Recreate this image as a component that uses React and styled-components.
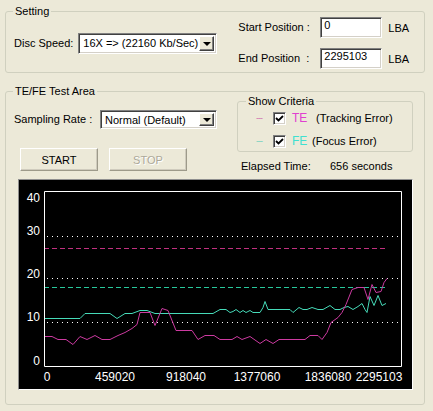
import React from 'react';
import styled, { createGlobalStyle } from 'styled-components';

const GlobalStyle = createGlobalStyle`
  html, body {
    margin: 0;
    background: #ece9d8;
  }
  body {
    font-family: "Liberation Sans", Arial, sans-serif;
    font-size: 11px;
    color: #000;
  }
`;

const Window = styled.div`
  width: 433px;
  height: 411px;
  box-sizing: border-box;
  padding: 6px 8px 0 5px;
  display: flex;
  flex-direction: column;
  gap: 13px;
  background: #ece9d8;
  overflow: hidden;
`;

const Group = styled.fieldset`
  margin: 0;
  min-width: 0;
  border: 1px solid #d0d0bf;
  border-radius: 3px;
  padding: ${(p) => p.$pad};
  display: flex;
  flex-direction: ${(p) => (p.$column ? 'column' : 'row')};
  align-items: ${(p) => (p.$column ? 'stretch' : 'center')};
  ${(p) => p.$width && `width: ${p.$width}px; box-sizing: border-box;`}
`;

const Legend = styled.legend`
  padding: 0 2px;
  margin-left: ${(p) => p.$offset || -1}px;
  line-height: 10px;
  font-size: 11px;
  color: #000;
`;

const Label = styled.span`
  white-space: pre;
  line-height: 13px;
  ${(p) => p.$width && `width: ${p.$width}px; flex: none;`}
`;

const Combo = styled.div`
  width: ${(p) => p.$width}px;
  height: ${(p) => p.$height}px;
  box-sizing: border-box;
  background: #fff;
  border-top: 1px solid #808080;
  border-left: 1px solid #808080;
  border-right: 1px solid #fff;
  border-bottom: 1px solid #fff;
  box-shadow: inset 1px 1px 0 #404040, inset -1px -1px 0 #d4d0c8;
  padding: 2px;
  display: flex;
  align-items: center;
`;

const ComboText = styled.span`
  flex: 1;
  padding-left: 2px;
  white-space: nowrap;
  overflow: hidden;
`;

const DropButton = styled.span`
  width: 15px;
  height: 100%;
  box-sizing: border-box;
  background: #ece9d8;
  border-top: 1px solid #fff;
  border-left: 1px solid #fff;
  border-right: 1px solid #404040;
  border-bottom: 1px solid #404040;
  box-shadow: inset -1px -1px 0 #808080;
  display: flex;
  align-items: center;
  justify-content: center;
  &::after {
    content: '';
    border-left: 4px solid transparent;
    border-right: 4px solid transparent;
    border-top: 4px solid #000;
    margin-top: 1px;
  }
`;

const TextBox = styled.div`
  width: 62px;
  height: 21px;
  box-sizing: border-box;
  background: #fff;
  border-top: 1px solid #808080;
  border-left: 1px solid #808080;
  border-right: 1px solid #fff;
  border-bottom: 1px solid #fff;
  box-shadow: inset 1px 1px 0 #404040, inset -1px -1px 0 #d4d0c8;
  padding: 1px 3px;
  line-height: 13px;
`;

const Row = styled.div`
  display: flex;
  align-items: center;
  gap: ${(p) => p.$gap || 0}px;
  ${(p) => p.$mt && `margin-top: ${p.$mt}px;`}
  ${(p) => p.$ml && `margin-left: ${p.$ml}px;`}
`;

const Column = styled.div`
  display: flex;
  flex-direction: column;
  gap: ${(p) => p.$gap || 0}px;
  ${(p) => p.$width && `width: ${p.$width}px;`}
  ${(p) => p.$ml && `margin-left: ${p.$ml};`}
`;

const Unit = styled.span`
  margin-left: 6px;
`;

const TopArea = styled.div`
  display: flex;
  align-items: flex-start;
`;

const Button = styled.button`
  width: 78px;
  height: 23px;
  box-sizing: border-box;
  background: #ece9d8;
  font-family: inherit;
  font-size: 11px;
  color: ${(p) => (p.disabled ? '#aca899' : '#000')};
  border-top: 1px solid #fff;
  border-left: 1px solid #fff;
  border-right: 1px solid #9d9a8a;
  border-bottom: 1px solid #9d9a8a;
  box-shadow: inset -1px -1px 0 #cfcbbd;
  padding: 0;
  text-shadow: ${(p) => (p.disabled ? '1px 1px 0 #fff' : 'none')};
`;

const CriteriaRow = styled.div`
  display: flex;
  align-items: center;
  height: 14px;
`;

const Dash = styled.span`
  width: 17px;
  flex: none;
  color: ${(p) => p.$color};
  font-size: 9px;
  letter-spacing: -1px;
`;

const Check = styled.span`
  width: 13px;
  height: 13px;
  box-sizing: border-box;
  flex: none;
  background: #fff;
  border-top: 1px solid #808080;
  border-left: 1px solid #808080;
  border-right: 1px solid #fff;
  border-bottom: 1px solid #fff;
  box-shadow: inset 1px 1px 0 #404040, inset -1px -1px 0 #d4d0c8;
  margin-right: 6px;
  display: flex;
  align-items: center;
  justify-content: center;
`;

const Code = styled.span`
  color: ${(p) => p.$color};
  font-size: 12px;
  width: ${(p) => p.$width}px;
  flex: none;
`;

const ChartPanel = styled.div`
  margin: 6px 0 0 4px;
  height: 211px;
  box-sizing: border-box;
  background: #000;
  border-top: 1px solid #8f8f8f;
  border-left: 1px solid #8f8f8f;
  border-right: 1px solid #fff;
  border-bottom: 1px solid #fff;
  svg {
    display: block;
  }
`;

const fe = [
  [44, 319], [80, 319], [85, 314], [110, 314], [117, 319], [125, 314], [132, 314], [140, 311],
  [147, 311], [155, 314], [213, 314], [220, 310], [226, 310], [230, 313], [233, 312], [236, 310],
  [240, 313], [243, 311], [246, 313], [250, 311], [253, 313], [260, 313], [263, 308], [265, 302],
  [268, 310], [290, 310], [293, 313], [299, 308], [303, 310], [307, 310], [312, 308], [318, 310],
  [323, 310], [330, 306], [335, 310], [340, 310], [344, 308], [348, 307], [353, 310], [358, 307],
  [362, 304], [365, 310], [367, 313], [370, 297], [374, 306], [378, 296], [382, 306], [386, 304],
];

const te = [
  [44, 337], [52, 337], [58, 340], [66, 340], [73, 345], [80, 337], [87, 340], [95, 336],
  [102, 340], [110, 340], [118, 336], [125, 333], [132, 329], [137, 325], [140, 313], [150, 313],
  [155, 326], [162, 309], [168, 311], [176, 331], [192, 331], [198, 340], [205, 336], [214, 336],
  [220, 340], [232, 340], [237, 337], [242, 340], [250, 337], [260, 344], [266, 340], [273, 344],
  [279, 340], [305, 340], [310, 336], [318, 336], [322, 340], [327, 333], [331, 323], [338, 318],
  [342, 313], [346, 305], [352, 290], [358, 288], [364, 288], [368, 300], [372, 285], [376, 293],
  [381, 292], [384, 283], [387, 279],
];

const yLabels = [
  ['40', 203],
  ['30', 236],
  ['20', 279],
  ['10', 322],
  ['0', 366],
];

const xLabels = [
  ['0', 47],
  ['459020', 115],
  ['918040', 186],
  ['1377060', 257],
  ['1836080', 328],
  ['2295103', 379],
];

const pts = (list) => list.map(([x, y]) => `${x},${y + 0.5}`).join(' ');

const Chart = () => (
  <svg width="393" height="209" viewBox="19 181 393 209">
    <g fontFamily="Liberation Sans, Arial, sans-serif" fontSize="12" fill="#fff">
      {yLabels.map(([t, y]) => (
        <text key={t} x="40" y={y} textAnchor="end">{t}</text>
      ))}
      {xLabels.map(([t, x]) => (
        <text key={t} x={x} y="382" textAnchor="middle">{t}</text>
      ))}
    </g>
    {[237, 279, 323].map((y) => (
      <line key={y} x1="47" x2="398" y1={y + 0.5} y2={y + 0.5} stroke="#fff" strokeDasharray="1 4" />
    ))}
    <line x1="44" x2="388" y1="249.5" y2="249.5" stroke="#c0307f" strokeDasharray="5 3" />
    <line x1="44" x2="388" y1="288.5" y2="288.5" stroke="#28c89c" strokeDasharray="5 3" />
    <polyline points={pts(fe)} fill="none" stroke="#46dbb9" strokeWidth="1" />
    <polyline points={pts(te)} fill="none" stroke="#cc3aa0" strokeWidth="1" />
    <polyline points="44.5,192.5 401.5,192.5 401.5,367.5 44.5,367.5 44.5,192.5" fill="none" stroke="#fff" />
  </svg>
);

const CheckMark = () => (
  <svg width="9" height="9" viewBox="0 0 9 9">
    <polyline points="1,4 3.5,6.5 8,2" fill="none" stroke="#000" strokeWidth="1.8" />
  </svg>
);

export default function App() {
  return (
    <>
      <GlobalStyle />
      <Window>
        <Group $pad="1px 0 3px 8px">
          <Legend>Setting</Legend>
          <Row $gap={5}>
            <Label>Disc Speed:</Label>
            <Combo $width={139} $height={21}>
              <ComboText>16X =&gt; (22160 Kb/Sec)</ComboText>
              <DropButton />
            </Combo>
          </Row>
          <Column $gap={10} $ml="21px">
            <Row>
              <Label $width={82}>Start Position :</Label>
              <TextBox>0</TextBox>
              <Unit>LBA</Unit>
            </Row>
            <Row>
              <Label $width={82}>{'End Position  :'}</Label>
              <TextBox>2295103</TextBox>
              <Unit>LBA</Unit>
            </Row>
          </Column>
        </Group>

        <Group $column $pad="0 11px 14px 8px">
          <Legend>TE/FE Test Area</Legend>
          <TopArea>
            <Column>
              <Row $mt={14}>
                <Label $width={86}>Sampling Rate :</Label>
                <Combo $width={117} $height={19}>
                  <ComboText>Normal (Default)</ComboText>
                  <DropButton />
                </Combo>
              </Row>
              <Row $mt={19} $ml={6} $gap={11}>
                <Button>START</Button>
                <Button disabled>STOP</Button>
              </Row>
            </Column>
            <Column $width={176} $ml="auto">
              <Group $column $pad="5px 0 3px 18px">
                <Legend $offset={-10}>Show Criteria</Legend>
                <Column $gap={9}>
                  <CriteriaRow>
                    <Dash $color="#d070b0">---</Dash>
                    <Check><CheckMark /></Check>
                    <Code $color="#e040d0" $width={24}>TE</Code>
                    <Label>(Tracking Error)</Label>
                  </CriteriaRow>
                  <CriteriaRow>
                    <Dash $color="#70d0c0">---</Dash>
                    <Check><CheckMark /></Check>
                    <Code $color="#40e0d0" $width={20}>FE</Code>
                    <Label>(Focus Error)</Label>
                  </CriteriaRow>
                </Column>
              </Group>
              <Row $mt={8} $ml={4}>
                <Label $width={89}>Elapsed Time:</Label>
                <Label>656 seconds</Label>
              </Row>
            </Column>
          </TopArea>
          <ChartPanel>
            <Chart />
          </ChartPanel>
        </Group>
      </Window>
    </>
  );
}
